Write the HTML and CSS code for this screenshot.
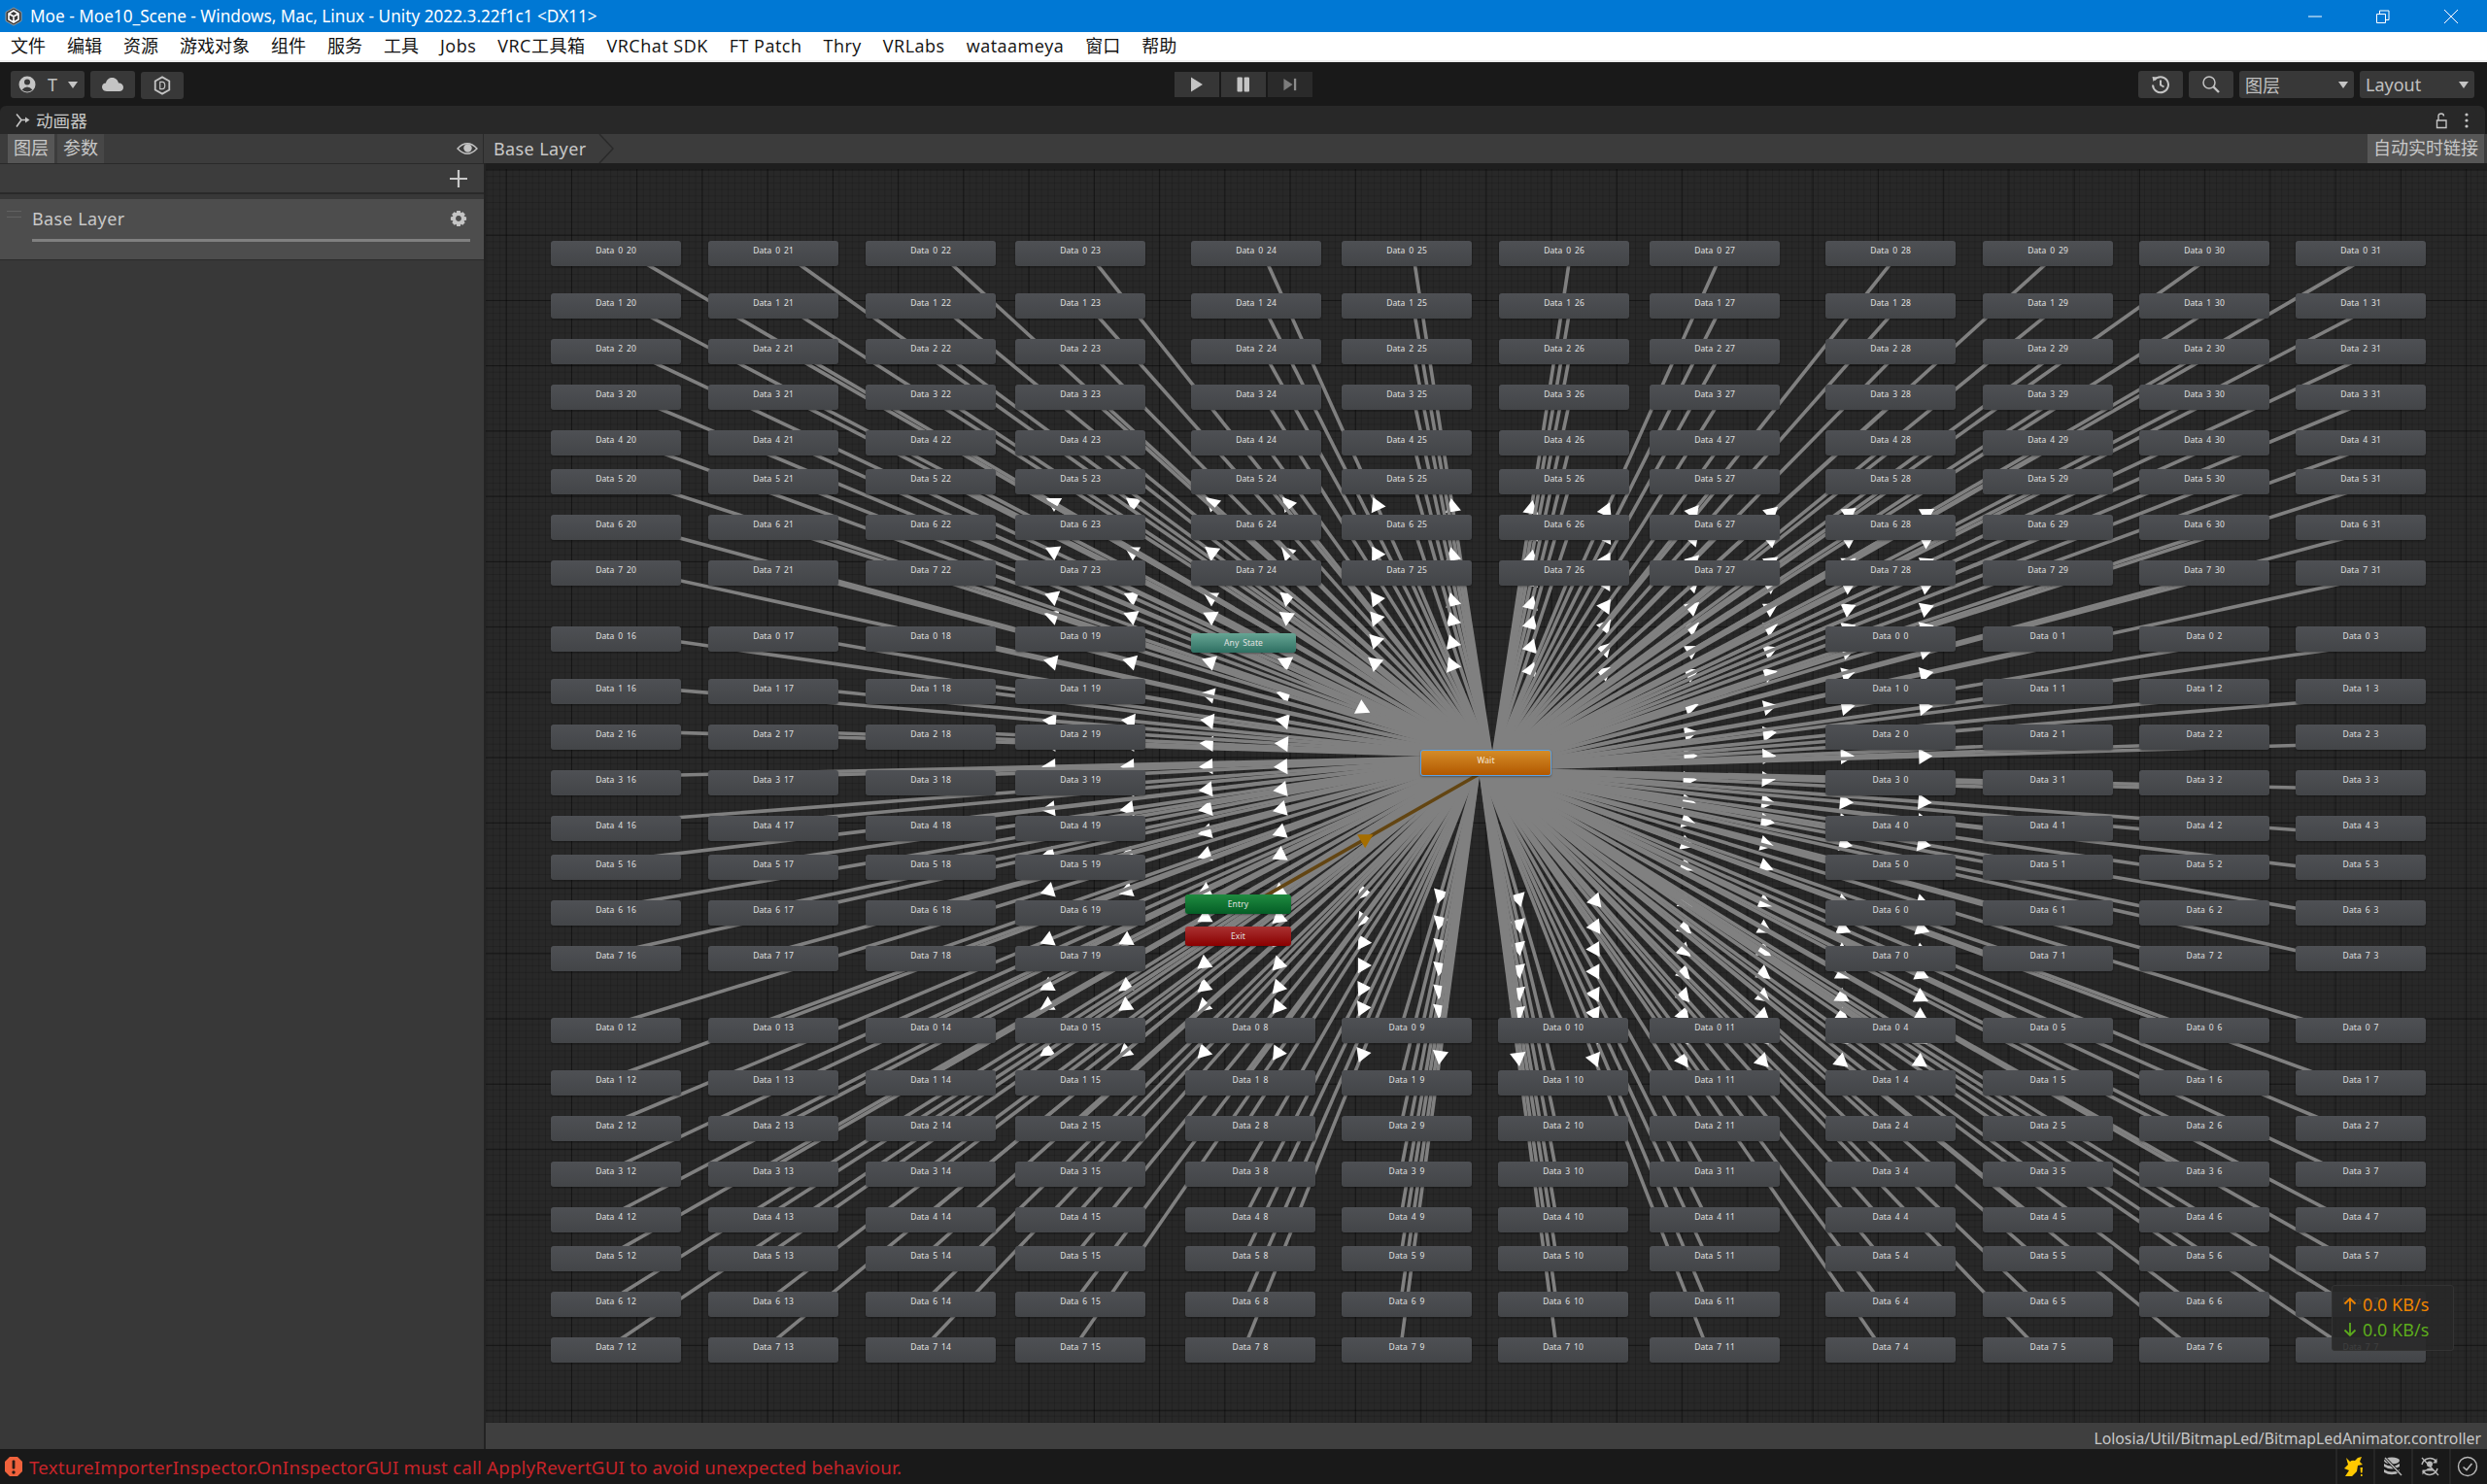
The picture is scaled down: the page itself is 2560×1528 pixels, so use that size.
FILE: index.html
```html
<!DOCTYPE html>
<html lang="en">
<head>
    <meta charset="UTF-8">
    <title>Moe - Moe10_Scene - Unity</title>
    <link rel="stylesheet" href="styles.css">
</head>
<body>
    <div class="titlebar">
        <svg class="app-icon" viewBox="0 0 20 20">
            <path d="M10 1 L18 5.5 V14.5 L10 19 L2 14.5 V5.5 Z" fill="#3a3a3a" stroke="#9a9a9a"/>
            <path d="M10 4 L15 7 V13 L10 16 L5 13 V7 Z M5 7 L10 10 L15 7 M10 10 V16" fill="none" stroke="#fff" stroke-width="1.6"/>
        </svg>
        <span class="title-text">Moe - Moe10_Scene - Windows, Mac, Linux - Unity 2022.3.22f1c1 &lt;DX11&gt;</span>
        <div class="win-buttons">
            <svg viewBox="0 0 16 16"><path d="M1 8 H15" stroke="#fff" fill="none"/></svg>
            <svg viewBox="0 0 16 16"><path d="M1.5 5.5 H10.5 V14.5 H1.5 Z M4.5 5 V2 H14 V11.5 H11" stroke="#fff" fill="none"/></svg>
            <svg viewBox="0 0 16 16"><path d="M1 1 L15 15 M15 1 L1 15" stroke="#fff" fill="none"/></svg>
        </div>
    </div>

    <div class="menubar">
        <span>文件</span><span>编辑</span><span>资源</span><span>游戏对象</span><span>组件</span><span>服务</span><span>工具</span><span class="lat">Jobs</span><span class="lat">VRC工具箱</span><span class="lat">VRChat SDK</span><span class="lat">FT Patch</span><span class="lat">Thry</span><span class="lat">VRLabs</span><span class="lat">wataameya</span><span>窗口</span><span>帮助</span>
    </div>

    <div class="toolbar">
        <div class="tool-group">
            <div class="tool-btn account">
                <svg class="ico" viewBox="0 0 20 20"><circle cx="10" cy="10" r="8.5" fill="#c4c4c4"/><circle cx="10" cy="7.5" r="3" fill="#383838"/><path d="M4.5 15.5 Q10 9.5 15.5 15.5 Q10 19.5 4.5 15.5 Z" fill="#383838"/></svg>
                <span>T</span>
                <i class="caret"></i>
            </div>
            <div class="tool-btn cloud">
                <svg class="ico-wide" viewBox="0 0 24 18"><path d="M6 16 C2 16 1 13 1 11.5 C1 9 3 7.5 5 7.5 C5.5 4 8.5 2 11.5 2 C15 2 17.5 4.5 18 7.5 C21 7.5 23 9.5 23 12 C23 14.5 21 16 19 16 Z" fill="#c4c4c4"/></svg>
            </div>
            <div class="tool-btn hex">
                <svg class="ico" viewBox="0 0 20 22"><path d="M10 1.5 L18 6 V16 L10 20.5 L2 16 V6 Z" fill="none" stroke="#c4c4c4" stroke-width="2"/><path d="M7.5 7 H10 Q13 7 13 11 Q13 15 10 15 H7.5 Z" fill="none" stroke="#c4c4c4" stroke-width="1.3"/></svg>
            </div>
        </div>
        <div class="play-group">
            <div class="play-btn"><svg viewBox="0 0 14 16"><path d="M1 0.5 L13 8 L1 15.5 Z" fill="#c4c4c4"/></svg></div>
            <div class="play-btn"><svg viewBox="0 0 14 16"><rect x="0.5" y="0.5" width="5.4" height="15" rx="1" fill="#c4c4c4"/><rect x="7.6" y="0.5" width="5.4" height="15" rx="1" fill="#c4c4c4"/></svg></div>
            <div class="play-btn dim"><svg viewBox="0 0 16 16"><path d="M0.5 1 L11 8 L0.5 15 Z" fill="#7c7c7c"/><rect x="12.5" y="1" width="2.6" height="14" fill="#8c8c8c"/></svg></div>
        </div>
        <div class="tool-group right">
            <div class="tool-btn square">
                <svg class="ico" viewBox="0 0 20 20"><path d="M3.5 5.5 A8 8 0 1 1 2 10.5" fill="none" stroke="#c4c4c4" stroke-width="2"/><path d="M1.5 2 L6.5 2.5 L2.5 7 Z" fill="#c4c4c4"/><path d="M10 5.5 V10.5 L13.5 12.5" fill="none" stroke="#c4c4c4" stroke-width="2"/></svg>
            </div>
            <div class="tool-btn square">
                <svg class="ico" viewBox="0 0 20 20"><circle cx="8" cy="8" r="6" fill="none" stroke="#c4c4c4" stroke-width="1.5"/><path d="M12.5 12.5 L18 18" stroke="#c4c4c4" stroke-width="2.4"/></svg>
            </div>
            <div class="tool-btn select"><span>图层</span><i class="caret"></i></div>
            <div class="tool-btn select"><span>Layout</span><i class="caret"></i></div>
        </div>
    </div>

    <div class="dock-tabs">
        <div class="dock-title">
            <svg class="animator-ico" viewBox="0 0 16 16"><path d="M2 1.5 L7 7.5 L2 14.5 M7 7.5 H13" fill="none" stroke="#c4c4c4" stroke-width="1.6"/><path d="M11 4.5 L15.5 7.5 L11 10.5 Z" fill="#c4c4c4"/></svg>
            <span>动画器</span>
        </div>
        <div class="dock-actions">
            <svg viewBox="0 0 14 18"><path d="M2.5 9 H12 V16.5 H2.5 Z M4 9 V4.5 Q4 2 7 2 Q9.5 2 9.5 4.5" fill="none" stroke="#c4c4c4" stroke-width="1.4"/></svg>
            <svg viewBox="0 0 14 18"><circle cx="7" cy="3" r="1.6" fill="#c4c4c4"/><circle cx="7" cy="9" r="1.6" fill="#c4c4c4"/><circle cx="7" cy="15" r="1.6" fill="#c4c4c4"/></svg>
        </div>
    </div>

    <div class="head-row">
        <div class="head-left">
            <span class="side-tab active">图层</span>
            <span class="side-tab">参数</span>
            <svg class="eye" viewBox="0 0 22 14"><path d="M1 7 Q11 -3.5 21 7 Q11 17.5 1 7 Z" fill="none" stroke="#c4c4c4" stroke-width="1.4"/><circle cx="11.5" cy="6.5" r="4.2" fill="#c4c4c4"/></svg>
        </div>
        <div class="crumb">
            <span>Base Layer</span>
            <svg class="crumb-end" viewBox="0 0 16 30"><path d="M1 0 L15 15 L1 30" fill="none" stroke="#2a2a2a" stroke-width="1.5"/></svg>
        </div>
        <span class="live-link">自动实时链接</span>
    </div>

    <div class="main">
        <div class="sidebar">
            <div class="add-row">
                <svg viewBox="0 0 18 18"><path d="M9 0 V18 M0 9 H18" stroke="#c8c8c8" stroke-width="2.2"/></svg>
            </div>
            <div class="layer-row">
                <i class="grip"></i>
                <div class="layer-body">
                    <div class="layer-head">
                        <span>Base Layer</span>
                        <svg viewBox="0 0 20 20"><path fill="#c4c4c4" fill-rule="evenodd" d="M8 1 H12 L12.6 3.6 L15 2.6 L17.6 5.4 L16.2 7.6 L19 8.3 V11.9 L16.2 12.5 L17.4 14.8 L14.8 17.4 L12.6 16.3 L12 19 H8 L7.4 16.3 L5.2 17.4 L2.6 14.8 L3.8 12.5 L1 11.9 V8.3 L3.8 7.6 L2.4 5.4 L5 2.6 L7.4 3.6 Z M10 6.8 A3.3 3.3 0 1 0 10.01 6.8 Z"/></svg>
                    </div>
                    <div class="layer-weight"></div>
                </div>
            </div>
        </div>
        <div class="graph-col">
            <div class="graph" id="graph">
                <svg class="edges" id="edges" width="2060" height="1297"></svg>
                <div class="net-panel">
                    <div class="net-up">
                        <svg viewBox="0 0 14 16"><path d="M7 15 V2 M1.5 7.5 L7 2 L12.5 7.5" fill="none" stroke="#ee8400" stroke-width="1.8"/></svg>
                        <span>0.0 KB/s</span>
                    </div>
                    <div class="net-down">
                        <svg viewBox="0 0 14 16"><path d="M7 1 V14 M1.5 8.5 L7 14 L12.5 8.5" fill="none" stroke="#5cab1c" stroke-width="1.8"/></svg>
                        <span>0.0 KB/s</span>
                    </div>
                </div>
            </div>
            <div class="path-bar">Lolosia/Util/BitmapLed/BitmapLedAnimator.controller</div>
        </div>
    </div>

    <div class="statusbar">
        <svg class="err-ico" viewBox="0 0 20 22"><path d="M6 1 H14 L19 6 V16 L14 21 H6 L1 16 V6 Z" fill="#f0623c"/><rect x="8.6" y="4.5" width="2.8" height="9" rx="1" fill="#2a1a14"/><circle cx="10" cy="17" r="1.7" fill="#2a1a14"/></svg>
        <span class="err-text">TextureImporterInspector.OnInspectorGUI must call ApplyRevertGUI to avoid unexpected behaviour.</span>
        <div class="status-icons">
            <div class="status-cell">
                <svg viewBox="0 0 22 22"><path d="M3 2 L7 6 Q9 4 12 5 L15 2 L19 1 L17 6 L20 9 L15 10 L14 16 L9 21 L2 21 L6 15 L1 13 L5 9 Z" fill="#ffc800"/><path d="M17.5 12 H20 L19.5 17.5 H18 Z M18 19 H19.6 V21 H18 Z" fill="#ffc800"/></svg>
            </div>
            <div class="status-cell">
                <svg viewBox="0 0 22 22"><ellipse cx="11" cy="5" rx="8" ry="3.4" fill="#b8b8b8"/><path d="M3 8 Q11 13 19 8 V11 Q11 16 3 11 Z M3 14 Q11 19 19 14 V17 Q11 21.5 3 17 Z" fill="#b8b8b8"/><path d="M4 2 L21 20" stroke="#191919" stroke-width="3"/><path d="M4 2 L21 20" stroke="#b8b8b8" stroke-width="1.4"/></svg>
            </div>
            <div class="status-cell">
                <svg viewBox="0 0 22 22"><path d="M3 9 A8.5 8.5 0 0 1 18 6 M19 13 A8.5 8.5 0 0 1 4 16" fill="none" stroke="#b8b8b8" stroke-width="1.5"/><path d="M18.5 2.5 V7.5 H14 Z M3.5 19.5 V14.5 H8 Z" fill="#b8b8b8"/><circle cx="11" cy="8.5" r="3" fill="#b8b8b8"/><path d="M6 15.5 Q11 9.5 16 15.5 Z" fill="#b8b8b8"/><path d="M3 2 L20 20" stroke="#b8b8b8" stroke-width="1.3"/></svg>
            </div>
            <div class="status-cell">
                <svg viewBox="0 0 22 22"><circle cx="11" cy="11" r="9.5" fill="none" stroke="#b8b8b8" stroke-width="1.4"/><path d="M6.5 11.5 L10 14.5 L15.5 8" fill="none" stroke="#b8b8b8" stroke-width="1.6"/></svg>
            </div>
        </div>
    </div>

    <script src="app.js"></script>
</body>
</html>
```

FILE: styles.css
```css
* {
    box-sizing: border-box;
}
html, body {
    margin: 0;
    height: 100%;
}
body {
    width: 2560px;
    height: 1528px;
    overflow: hidden;
    display: flex;
    flex-direction: column;
    background: #191919;
    font-family: "Noto Sans", "Noto Sans CJK SC", sans-serif;
    color: #c8c8c8;
}

/* window chrome */
.titlebar {
    height: 33px;
    background: #0078d4;
    color: #fff;
    display: flex;
    align-items: center;
    padding-left: 4px;
}
.app-icon {
    width: 20px;
    height: 20px;
    margin-right: 7px;
}
.title-text {
    flex: 1;
    font-size: 17.2px;
}
.win-buttons {
    display: flex;
    gap: 54px;
    padding-right: 29px;
}
.win-buttons svg {
    width: 16px;
    height: 16px;
}
.menubar {
    height: 31px;
    background: #fff;
    border-bottom: 2px solid #ececec;
    color: #111;
    font-size: 18px;
    line-height: 28px;
    display: flex;
    gap: 22px;
    padding-left: 11px;
    font-family: "Open Sans", "Noto Sans CJK SC", sans-serif;
}
.menubar .lat {
    letter-spacing: 0.5px;
}

/* toolbar */
.toolbar {
    height: 45px;
    display: flex;
    align-items: flex-start;
    padding-top: 9px;
    position: relative;
    background: #191919;
}
.tool-group {
    display: flex;
    gap: 6px;
    padding-left: 11px;
}
.tool-group.right {
    margin-left: auto;
    padding: 0 13px 0 0;
}
.tool-btn {
    height: 28px;
    background: #383838;
    border-radius: 3px;
    display: flex;
    align-items: center;
    justify-content: center;
    font-size: 18px;
    color: #c0c0c0;
}
.account {
    width: 76px;
    justify-content: flex-start;
    padding-left: 7px;
    gap: 11px;
}
.cloud {
    width: 46px;
}
.hex {
    width: 44px;
    margin-top: 1px;
}
.square {
    width: 46px;
}
.select {
    width: 118px;
    justify-content: space-between;
    padding: 0 6px;
}
.ico {
    width: 20px;
    height: 20px;
}
.ico-wide {
    width: 24px;
    height: 18px;
}
.caret {
    width: 0;
    height: 0;
    border-left: 5px solid transparent;
    border-right: 5px solid transparent;
    border-top: 7px solid #c4c4c4;
    display: block;
}
.play-group {
    position: absolute;
    left: 1209px;
    top: 10px;
    display: flex;
    gap: 2px;
}
.play-btn {
    width: 46px;
    height: 26px;
    background: #363636;
    display: flex;
    align-items: center;
    justify-content: center;
}
.play-btn.dim {
    background: #2a2a2a;
}
.play-btn svg {
    width: 14px;
    height: 16px;
}

/* dock header */
.dock-tabs {
    height: 29px;
    background: #282828;
    border-radius: 6px 6px 0 0;
    margin-right: 2px;
    display: flex;
    align-items: center;
    justify-content: space-between;
    font-size: 17.6px;
    padding: 0 12px 0 15px;
}
.dock-title {
    display: flex;
    align-items: center;
    gap: 6px;
}
.animator-ico {
    width: 16px;
    height: 16px;
}
.dock-actions {
    display: flex;
    gap: 12px;
}
.dock-actions svg {
    width: 14px;
    height: 18px;
}
.head-row {
    height: 30px;
    background: #3c3c3c;
    display: flex;
    font-size: 18px;
}
.head-left {
    width: 498px;
    display: flex;
    align-items: stretch;
    padding-left: 8px;
    gap: 3px;
    border-right: 1px solid #2a2a2a;
}
.side-tab {
    width: 48px;
    background: #474747;
    text-align: center;
    line-height: 29px;
}
.side-tab.active {
    background: #565656;
}
.eye {
    width: 22px;
    height: 14px;
    margin: 8px 5px 0 auto;
}
.crumb {
    display: flex;
    align-items: center;
    padding-left: 10px;
    gap: 12px;
    letter-spacing: 0.4px;
}
.crumb-end {
    width: 16px;
    height: 30px;
}
.live-link {
    margin-left: auto;
    margin-right: 3px;
    width: 120px;
    background: #565656;
    text-align: center;
    line-height: 29px;
    font-size: 18px;
}

/* main area */
.main {
    flex: 1;
    display: flex;
    min-height: 0;
}
.sidebar {
    width: 500px;
    background: #383838;
    border-right: 2px solid #232323;
}
.add-row {
    height: 32px;
    background: #3c3c3c;
    border-top: 1px solid #2a2a2a;
    border-bottom: 2px solid #2a2a2a;
    display: flex;
    justify-content: flex-end;
    align-items: center;
    padding-right: 17px;
}
.add-row svg {
    width: 18px;
    height: 18px;
}
.layer-row {
    margin-top: 5px;
    height: 63px;
    background: #4d4d4d;
    border-bottom: 1px solid #2a2a2a;
    display: flex;
    padding: 0 14px 0 7px;
}
.grip {
    display: block;
    width: 15px;
    height: 7px;
    margin-top: 12px;
    border-top: 1px solid #626262;
    border-bottom: 1px solid #626262;
}
.layer-body {
    flex: 1;
    margin-left: 11px;
}
.layer-head {
    display: flex;
    justify-content: space-between;
    align-items: center;
    height: 41px;
    padding: 0 3px 2px 0;
    font-size: 18px;
    letter-spacing: 0.4px;
}
.layer-head svg {
    width: 18px;
    height: 18px;
}
.layer-weight {
    height: 3px;
    background: #808080;
}
.graph-col {
    flex: 1;
    display: flex;
    flex-direction: column;
    min-width: 0;
}
.graph {
    flex: 1;
    position: relative;
    overflow: hidden;
    background-color: #282828;
    background-image:
        linear-gradient(#1e1e1e, #1e1e1e),
        linear-gradient(90deg, rgba(0,0,0,0.42) 1px, transparent 1px),
        linear-gradient(rgba(0,0,0,0.42) 1px, transparent 1px),
        linear-gradient(90deg, rgba(0,0,0,0.14) 1px, transparent 1px),
        linear-gradient(rgba(0,0,0,0.14) 1px, transparent 1px);
    background-size: 100% 6px, 67.25px 67.25px, 67.25px 67.25px, 6.725px 6.725px, 6.725px 6.725px;
    background-repeat: no-repeat, repeat, repeat, repeat, repeat;
    background-position: 0 0, 20.7px 6.45px, 20.7px 6.45px, 20.7px 6.45px, 20.7px 6.45px;
}
.edges {
    position: absolute;
    left: 0;
    top: 0;
}
.node {
    position: absolute;
    width: 134px;
    height: 26px;
    border-radius: 3px;
    background: linear-gradient(#4e5054, #434548);
    box-shadow: 0 1px 2px rgba(0,0,0,0.35);
    color: #e0e0e0;
    font-size: 8.5px;
    line-height: 20px;
    text-align: center;
    word-spacing: 1.5px;
    letter-spacing: 0.1px;
    font-family: "Noto Sans", sans-serif;
}
.node-short {
    width: 108px;
    height: 20px;
    line-height: 20px;
}
.node-any {
    background: linear-gradient(#66a594, #2e6f62);
}
.node-entry {
    width: 109px;
    background: linear-gradient(#1f8b40, #045e26);
}
.node-exit {
    width: 109px;
    background: linear-gradient(#a93232, #8a0000);
}
.node-wait {
    width: 135px;
    height: 27px;
    line-height: 19px;
    background: linear-gradient(#d48c28, #b25800);
    border: 1px solid #5aa2e6;
    color: #f4e6d4;
}
.net-panel {
    position: absolute;
    left: 1900px;
    top: 1155px;
    width: 126px;
    height: 68px;
    background: rgba(40,40,40,0.88);
    border: 1px solid #333;
    border-radius: 3px;
    padding: 6px 0 0 11px;
    font-size: 18px;
    line-height: 26px;
}
.net-up,
.net-down {
    display: flex;
    align-items: center;
    gap: 6px;
}
.net-up svg,
.net-down svg {
    width: 14px;
    height: 16px;
}
.net-up {
    color: #ee8400;
}
.net-down {
    color: #5cab1c;
}
.path-bar {
    height: 27px;
    background: #3f3f3f;
    text-align: right;
    padding-right: 6px;
    font-size: 15.8px;
    line-height: 33px;
}

/* status bar */
.statusbar {
    height: 36px;
    background: #191919;
    display: flex;
    align-items: center;
    padding-left: 4px;
    position: relative;
    z-index: 1;
}
.err-ico {
    width: 20px;
    height: 22px;
    margin-right: 6px;
}
.err-text {
    color: #c8242a;
    font-size: 18.7px;
    letter-spacing: 0.2px;
}
.status-icons {
    margin-left: auto;
    display: flex;
}
.status-cell {
    width: 39px;
    height: 36px;
    border-left: 2px solid #262626;
    padding-right: 3px;
    display: flex;
    align-items: center;
    justify-content: center;
}
.status-cell svg {
    width: 22px;
    height: 22px;
}
```

FILE: app.js
```js
// graph is laid out in the canvas's own coordinates, canvas origin is 500,168 on screen
const originX = 500;
const originY = 168;

const colX = [567, 729, 891, 1045, 1226, 1381, 1543, 1698, 1879, 2041, 2202, 2363];
const colX3 = [567, 729, 891, 1045, 1220, 1381, 1542, 1698, 1879, 2041, 2202, 2363];
const rowGaps = [0, 54, 101, 148, 195, 235, 282, 329];

const blocks = [
    { top: 248, cols: [20, 21, 22, 23, 24, 25, 26, 27, 28, 29, 30, 31], xs: colX },
    { top: 645, cols: [16, 17, 18, 19, null, null, null, null, 0, 1, 2, 3], xs: colX },
    { top: 1048, cols: [12, 13, 14, 15, 8, 9, 10, 11, 4, 5, 6, 7], xs: colX3 }
];

const wait = { x: 1462, y: 772, w: 135, h: 27, label: 'Wait', cls: 'node-wait' };
const specials = [
    { x: 1226, y: 652, w: 108, h: 20, label: 'Any State', cls: 'node-short node-any' },
    { x: 1220, y: 921, w: 109, h: 20, label: 'Entry', cls: 'node-short node-entry' },
    { x: 1220, y: 954, w: 109, h: 20, label: 'Exit', cls: 'node-short node-exit' }
];

const graph = document.getElementById('graph');
const edges = document.getElementById('edges');
const SVG_NS = 'http://www.w3.org/2000/svg';
const OFFSET = 6.5;
const ARROW_R = 9.4;

function center(n) {
    return { x: n.x + n.w / 2, y: n.y + n.h / 2 };
}

function addNode(n) {
    const el = document.createElement('div');
    el.className = 'node ' + (n.cls || '');
    el.style.left = (n.x - originX) + 'px';
    el.style.top = (n.y - originY) + 'px';
    el.textContent = n.label;
    graph.insertBefore(el, graph.querySelector('.net-panel'));
}

// a transition: line with a sideways offset, triangle at the middle.
// drawn one after another so later lines run over earlier triangles
function addEdge(from, to, stroke, fill) {
    const a = center(from);
    const b = center(to);
    const len = Math.hypot(b.x - a.x, b.y - a.y);
    const dx = (b.x - a.x) / len;
    const dy = (b.y - a.y) / len;
    const ox = -dy * OFFSET;
    const oy = dx * OFFSET;

    const line = document.createElementNS(SVG_NS, 'line');
    line.setAttribute('x1', a.x + ox - originX);
    line.setAttribute('y1', a.y + oy - originY);
    line.setAttribute('x2', b.x + ox - originX);
    line.setAttribute('y2', b.y + oy - originY);
    line.setAttribute('stroke', stroke);
    line.setAttribute('stroke-width', '3.6');
    edges.appendChild(line);

    const mx = (a.x + b.x) / 2 + ox - originX;
    const my = (a.y + b.y) / 2 + oy - originY;
    const pts = [0, 120, 240].map(deg => {
        const t = Math.atan2(dy, dx) + deg * Math.PI / 180;
        return (mx + Math.cos(t) * ARROW_R).toFixed(1) + ',' + (my + Math.sin(t) * ARROW_R).toFixed(1);
    });
    const tri = document.createElementNS(SVG_NS, 'polygon');
    tri.setAttribute('points', pts.join(' '));
    tri.setAttribute('fill', fill);
    edges.appendChild(tri);
}

const dataNodes = [];
blocks.forEach(block => {
    block.cols.forEach((c, i) => {
        if (c === null) return;
        rowGaps.forEach((gap, r) => {
            dataNodes.push({ x: block.xs[i], y: block.top + gap, w: 134, h: 26, r: r, c: c, label: 'Data ' + r + ' ' + c });
        });
    });
});

dataNodes.sort((p, q) => p.c - q.c || p.r - q.r);
dataNodes.forEach(n => addEdge(wait, n, '#808080', '#ffffff'));
addEdge(specials[0], wait, '#808080', '#ffffff');
addEdge(specials[1], wait, '#634512', '#a56e00');

dataNodes.forEach(addNode);
specials.forEach(addNode);
addNode(wait);
```
